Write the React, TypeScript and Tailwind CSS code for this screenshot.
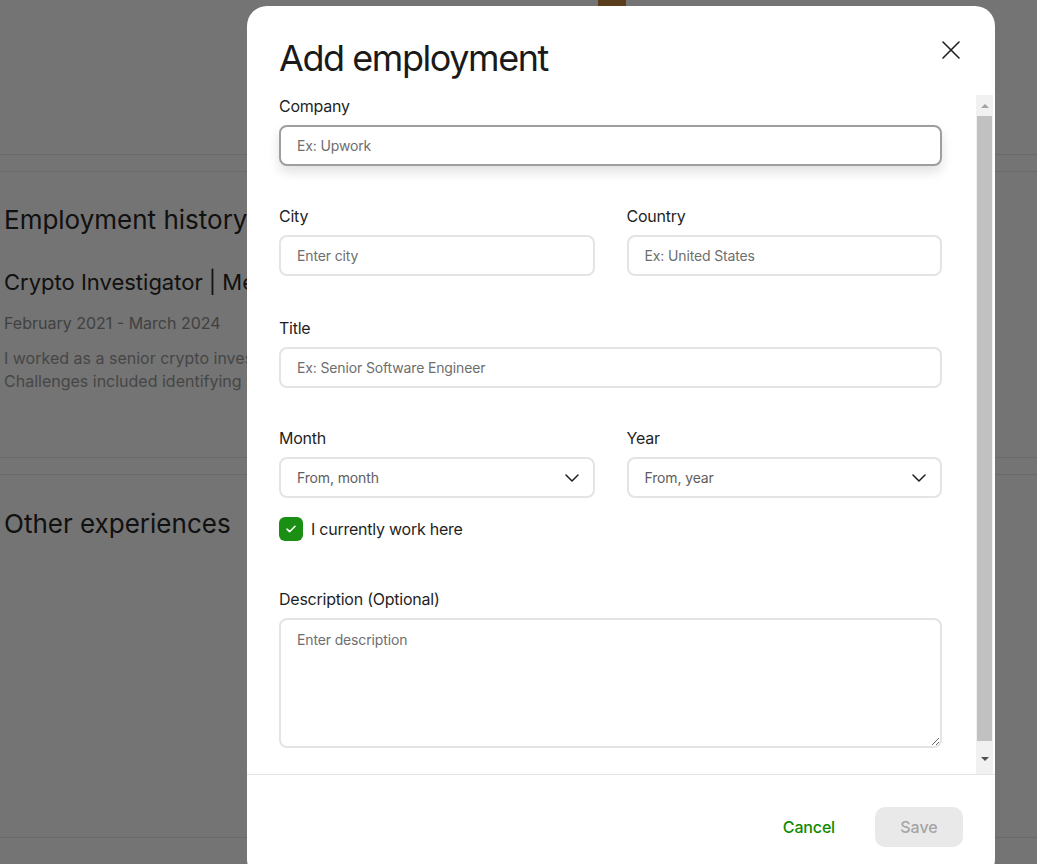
import React from "react";

const font = "font-['Inter',_'Noto_Sans',_sans-serif]";

function Chevron() {
  return (
    <svg width="14" height="8" viewBox="0 0 14 8" fill="none" className="shrink-0">
      <path d="M1 1l6 6 6-6" stroke="#1f1f1f" strokeWidth="1.5" strokeLinecap="round" strokeLinejoin="round" />
    </svg>
  );
}

function Field({ label, children, className = "" }: { label: string; children: React.ReactNode; className?: string }) {
  return (
    <div className={`flex flex-col ${className}`}>
      <label className="text-base leading-[22px] tracking-[-0.015em] text-[#1f1f1f]">{label}</label>
      <div className="mt-2">{children}</div>
    </div>
  );
}

function TextInput({ placeholder, focused }: { placeholder: string; focused?: boolean }) {
  return (
    <input
      type="text"
      placeholder={placeholder}
      className={
        focused
          ? "h-[41px] w-full rounded-lg border-2 border-[#9e9e9e] bg-white px-4 text-sm tracking-[-0.01em] text-[#1f1f1f] shadow-[0_6px_12px_rgba(0,0,0,0.12)] outline-none placeholder:text-[#6e6e6e]"
          : "h-[41px] w-full rounded-lg border-2 border-[#e4e4e4] bg-white px-4 text-sm tracking-[-0.01em] text-[#1f1f1f] outline-none placeholder:text-[#6e6e6e]"
      }
    />
  );
}

function SelectBox({ value }: { value: string }) {
  return (
    <button
      type="button"
      className="flex h-[41px] w-full items-center justify-between rounded-lg border-2 border-[#e4e4e4] bg-white pl-4 pr-[14px] text-left text-sm tracking-[-0.01em] text-[#5e5e5e]"
    >
      <span>{value}</span>
      <Chevron />
    </button>
  );
}

export default function App() {
  return (
    <div className={`relative h-[864px] w-full overflow-hidden bg-white ${font}`}>
      {/* page behind the dialog */}
      <div className="h-[155px] border-b border-[#e6e6e6]">
        <div className="ml-[598px] h-[8px] w-[28px] bg-[#c4863e]" />
      </div>
      <div className="h-[17px] border-b border-[#e6e6e6]" />
      <section className="h-[286px] border-b border-[#e6e6e6] pl-1 pt-[32px]">
        <h2 className="text-[26px] leading-[32px] text-[#262626]">Employment history</h2>
        <h3 className="mt-[32px] text-[22px] leading-[28px] text-[#262626]">Crypto Investigator | Meta Crypto Security</h3>
        <p className="mt-[16px] text-base leading-[22px] text-[#8f8f8f]">February 2021 - March 2024</p>
        <p className="mt-[13px] text-base leading-[23px] text-[#9a9a9a]">
          I worked as a senior crypto investigator tracing stolen funds across chains.
          <br />
          Challenges included identifying KYC exchanges and mixers.
        </p>
      </section>
      <div className="h-[17px] border-b border-[#e6e6e6]" />
      <section className="h-[363px] border-b border-[#e6e6e6] pl-1 pt-[33px]">
        <h2 className="text-[26px] leading-[32px] text-[#262626]">Other experiences</h2>
      </section>

      {/* overlay */}
      <div className="absolute inset-0 bg-[rgba(0,0,0,0.545)]" />

      {/* dialog */}
      <div className="absolute left-[247px] top-[6px] flex w-[748px] flex-col rounded-[20px] bg-white">
        <div className="flex h-[89px] items-start justify-between pl-8 pr-[35px] pt-8">
          <h1 className="text-[36px] font-normal leading-[40px] tracking-[-0.04em] text-[#1a1a1a]">Add employment</h1>
          <button type="button" className="mt-[3px]">
            <svg width="18" height="18" viewBox="0 0 18 18" fill="none">
              <path d="M1 1l16 16M17 1L1 17" stroke="#1f1f1f" strokeWidth="1.6" strokeLinecap="round" />
            </svg>
          </button>
        </div>

        <div className="flex h-[680px] border-b border-[#e4e4e4]">
          <div className="flex flex-1 flex-col overflow-hidden pl-8 pr-[34px]">
            <Field label="Company">
              <TextInput placeholder="Ex: Upwork" focused />
            </Field>
            <div className="mt-[39px] grid grid-cols-2 gap-8">
              <Field label="City">
                <TextInput placeholder="Enter city" />
              </Field>
              <Field label="Country">
                <TextInput placeholder="Ex: United States" />
              </Field>
            </div>
            <Field label="Title" className="mt-[41px]">
              <TextInput placeholder="Ex: Senior Software Engineer" />
            </Field>
            <div className="mt-[39px] grid grid-cols-2 gap-8">
              <Field label="Month">
                <SelectBox value="From, month" />
              </Field>
              <Field label="Year">
                <SelectBox value="From, year" />
              </Field>
            </div>

            <label className="mt-[19px] flex items-center gap-2">
              <span className="flex h-6 w-6 items-center justify-center rounded-md bg-[#1a8f14]">
                <svg width="12" height="10" viewBox="0 0 12 10" fill="none">
                  <path d="M2 5.2l2.6 2.5L10 2.3" stroke="#fff" strokeWidth="1.6" strokeLinecap="round" strokeLinejoin="round" />
                </svg>
              </span>
              <span className="text-base leading-[22px] tracking-[-0.015em] text-[#1f1f1f]">I currently work here</span>
            </label>

            <div className="mt-[47px]">
              <Field label="Description (Optional)">
                <textarea
                  placeholder="Enter description"
                  className="block h-[130px] w-full rounded-lg border-2 border-[#e4e4e4] bg-white px-4 py-[10px] text-sm tracking-[-0.01em] text-[#1f1f1f] outline-none placeholder:text-[#6e6e6e]"
                />
              </Field>
            </div>
          </div>

          <div className="mr-[2px] flex w-[17px] flex-col bg-[#f1f1f1]">
            <div className="flex h-[21px] items-center justify-center">
              <span className="h-0 w-0 border-x-[4px] border-b-[4px] border-x-transparent border-b-[#a3a3a3]" />
            </div>
            <div className="mx-[1px] h-[625px] bg-[#c1c1c1]" />
            <div className="flex flex-1 items-center justify-center pt-[2px]">
              <span className="h-0 w-0 border-x-[4px] border-t-[4px] border-x-transparent border-t-[#505050]" />
            </div>
          </div>
        </div>

        <div className="flex items-center justify-end gap-10 px-8 pb-8 pt-8">
          <button type="button" className="text-base font-medium tracking-[-0.01em] text-[#108a00]">
            Cancel
          </button>
          <button
            type="button"
            className="h-10 w-[88px] rounded-[10px] bg-[#e9e9e9] text-base font-medium text-[#a5a5a5]"
          >
            Save
          </button>
        </div>
      </div>
    </div>
  );
}
